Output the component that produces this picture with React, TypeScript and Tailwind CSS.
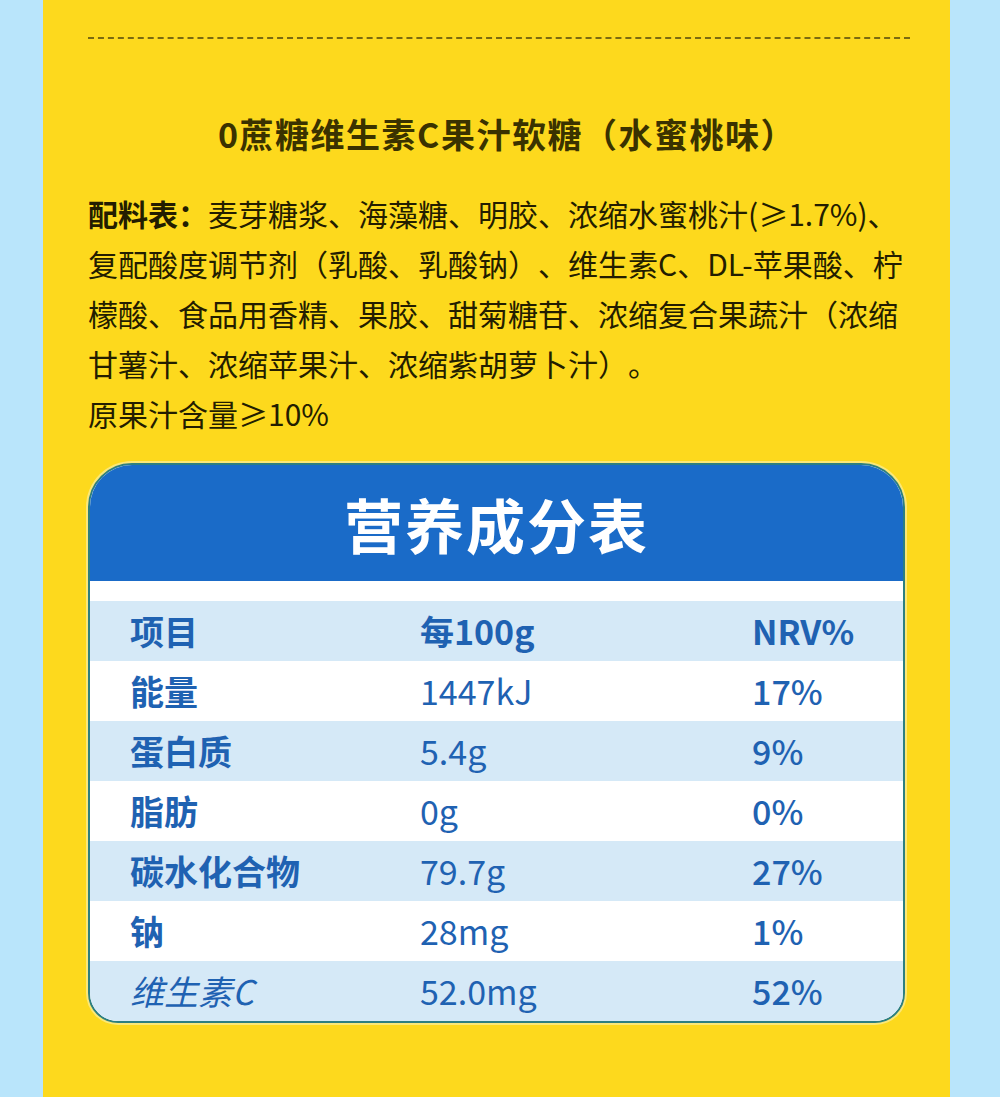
import React from 'react';

const FONT = '"Noto Sans CJK SC", "Noto Sans", sans-serif';

type Row = {
  name: string;
  per100: string;
  nrv: string;
  shaded: boolean;
  italic?: boolean;
};

const rows: Row[] = [
  { name: '能量', per100: '1447kJ', nrv: '17%', shaded: false },
  { name: '蛋白质', per100: '5.4g', nrv: '9%', shaded: true },
  { name: '脂肪', per100: '0g', nrv: '0%', shaded: false },
  { name: '碳水化合物', per100: '79.7g', nrv: '27%', shaded: true },
  { name: '钠', per100: '28mg', nrv: '1%', shaded: false },
  { name: '维生素C', per100: '52.0mg', nrv: '52%', shaded: true, italic: true },
];

export default function App() {
  return (
    <div className="w-[1000px] h-[1097px] bg-[#b9e5fb] pl-[43px] overflow-hidden" style={{ fontFamily: FONT }}>
      <div className="w-[907px] h-full bg-[#fdd91d] pl-[45px] pr-[40px] pt-[37px] [text-spacing-trim:space-all]">
        {/* dashed divider */}
        <div className="h-0 border-t-2 border-dashed border-[#7a6a10]" />

        {/* product title */}
        <h1 className="mt-[75px] h-[40px] flex items-center justify-center pl-[16px] text-[34px] font-bold tracking-[1.5px] text-[#3a3200] leading-none">
          0蔗糖维生素C果汁软糖（水蜜桃味）
        </h1>

        {/* ingredients */}
        <p className="mt-[34px] text-[30px] leading-[50px] text-[#231d00] whitespace-nowrap">
          <span className="font-bold">配料表：</span>麦芽糖浆、海藻糖、明胶、浓缩水蜜桃汁(≥1.7%)、
          <br />
          复配酸度调节剂（乳酸、乳酸钠）、维生素C、DL-苹果酸、柠
          <br />
          檬酸、食品用香精、果胶、甜菊糖苷、浓缩复合果蔬汁（浓缩
          <br />
          甘薯汁、浓缩苹果汁、浓缩紫胡萝卜汁）。
          <br />
          原果汁含量≥10%
        </p>

        {/* nutrition card */}
        <div className="mt-[25px] w-[817px] rounded-t-[44px] rounded-b-[30px] overflow-hidden border-2 border-[#2d7f80] bg-white shadow-[0_0_0_2px_#fbe878]">
          <div className="h-[116px] bg-[#1a6bc8] flex items-center justify-center">
            <span className="text-[59px] font-bold text-white tracking-[2px] leading-none">营养成分表</span>
          </div>
          <div className="h-[20px] bg-white" />

          <div className="h-[60px] bg-[#d5e9f7] grid grid-cols-[290px_332px_1fr] items-center pl-[40px] text-[34px] font-bold text-[#1f62b2] leading-none">
            <span>项目</span>
            <span>每100g</span>
            <span>NRV%</span>
          </div>

          {rows.map((r) => (
            <div
              key={r.name}
              className={`h-[60px] grid grid-cols-[290px_332px_1fr] items-center pl-[40px] text-[34px] text-[#1f62b2] leading-none ${
                r.shaded ? 'bg-[#d5e9f7]' : 'bg-white'
              }`}
            >
              <span className={r.italic ? 'italic font-normal' : 'font-bold'}>{r.name}</span>
              <span className="font-normal">{r.per100}</span>
              <span className="font-medium">{r.nrv}</span>
            </div>
          ))}
        </div>
      </div>
    </div>
  );
}
